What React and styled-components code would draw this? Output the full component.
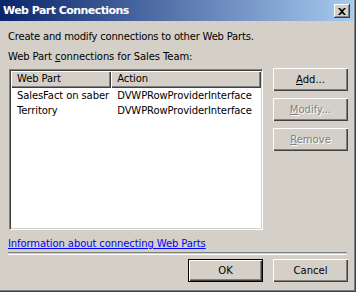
import React from 'react';
import styled, { createGlobalStyle } from 'styled-components';

const GlobalStyle = createGlobalStyle`
  html, body {
    margin: 0;
    padding: 0;
    background: #d4d0c8;
  }
  body {
    font-family: Tahoma, "DejaVu Sans", sans-serif;
    font-size: 11px;
  }
`;

const rows = [
  { part: 'SalesFact on saber', action: 'DVWPRowProviderInterface' },
  { part: 'Territory', action: 'DVWPRowProviderInterface' },
];

function App() {
  return (
    <>
      <GlobalStyle />
      <Window>
        <TitleBar>
          <Title>Web Part Connections</Title>
          <CloseButton aria-label='Close'>
            <svg width='8' height='7' viewBox='0 0 8 7'>
              <path d='M0 0h2l2 2 2-2h2L5 3.5 8 7H6L4 5 2 7H0l3-3.5z' fill='#000' />
            </svg>
          </CloseButton>
        </TitleBar>
        <Body>
          <Text>Create and modify connections to other Web Parts.</Text>
          <Label>Web Part <u>c</u>onnections for Sales Team:</Label>
          <Main>
            <ListBox>
              <HeaderRow>
                <HeaderCell $width={101}>Web Part</HeaderCell>
                <HeaderCell $width={151}>Action</HeaderCell>
              </HeaderRow>
              {rows.map((r) => (
                <Row key={r.part}>
                  <Cell $width={101}>{r.part}</Cell>
                  <Cell $width={151}>{r.action}</Cell>
                </Row>
              ))}
            </ListBox>
            <SideButtons>
              <Button><u>A</u>dd...</Button>
              <Button disabled><u>M</u>odify...</Button>
              <Button disabled><u>R</u>emove</Button>
            </SideButtons>
          </Main>
          <InfoLink href='#'>Information about connecting Web Parts</InfoLink>
          <Separator />
          <Footer>
            <Button $default>OK</Button>
            <Button>Cancel</Button>
          </Footer>
        </Body>
      </Window>
    </>
  );
}

export default App;

const Window = styled.div`
  width: 356px;
  height: 292px;
  box-sizing: border-box;
  background: #d4d0c8;
  border-right: 1px solid #404040;
  border-bottom: 1px solid #404040;
  box-shadow: inset -1px -1px 0 #808080;
  padding: 0 2px 2px 0;
  display: flex;
  flex-direction: column;
  overflow: hidden;
`;

const TitleBar = styled.div`
  height: 21px;
  display: flex;
  align-items: center;
  justify-content: space-between;
  padding: 0 3px 0 3px;
  background: linear-gradient(to right, #0a246a, #a6caf0);
`;

const Title = styled.span`
  color: #fff;
  font-weight: bold;
  font-size: 11px;
  font-family: "DejaVu Sans", sans-serif;
  letter-spacing: -0.55px;
`;

const CloseButton = styled.button`
  width: 16px;
  height: 14px;
  padding: 0;
  margin-top: 1px;
  display: flex;
  align-items: center;
  justify-content: center;
  background: #d4d0c8;
  border: none;
  box-shadow: inset -1px -1px #404040, inset 1px 1px #fff, inset -2px -2px #808080;
`;

const Body = styled.div`
  flex: 1;
  display: flex;
  flex-direction: column;
  padding: 9px 0 0 8px;
  color: #000;
  font-family: "DejaVu Sans", sans-serif;
  font-size: 10px;
  letter-spacing: -0.1px;
`;

const Text = styled.div`
  height: 20px;
  line-height: 13px;
  letter-spacing: -0.2px;
`;

const Label = styled.div`
  height: 18px;
  line-height: 13px;
`;

const Main = styled.div`
  display: flex;
  gap: 10px;
`;

const ListBox = styled.div`
  width: 254px;
  height: 161px;
  box-sizing: border-box;
  margin: 1px 0 0 1px;
  background: #fff;
  border-top: 1px solid #808080;
  border-left: 1px solid #808080;
  border-right: 1px solid #fff;
  border-bottom: 1px solid #fff;
  box-shadow: inset 1px 1px #404040, inset -1px -1px #d4d0c8;
  padding: 1px;
`;

const HeaderRow = styled.div`
  display: flex;
  height: 17px;
`;

const HeaderCell = styled.div`
  width: ${(p) => p.$width}px;
  box-sizing: border-box;
  background: #d4d0c8;
  padding-left: 6px;
  line-height: 16px;
  box-shadow: inset 1px 1px #fff, inset -1px -1px #404040, inset -2px -2px #808080;
`;

const Row = styled.div`
  display: flex;
  height: 15px;
  line-height: 15px;
`;

const Cell = styled.div`
  width: ${(p) => p.$width}px;
  padding-left: 6px;
  box-sizing: border-box;
  white-space: nowrap;
`;

const SideButtons = styled.div`
  display: flex;
  flex-direction: column;
  gap: 7px;
`;

const Button = styled.button`
  width: 75px;
  height: 23px;
  padding: 0;
  background: #d4d0c8;
  font-family: "DejaVu Sans", sans-serif;
  font-size: 10px;
  color: #000;
  border: ${(p) => (p.$default ? '1px solid #000' : 'none')};
  box-shadow: inset 1px 1px #fff, inset -1px -1px #404040, inset -2px -2px #808080;
  &:disabled {
    color: #808080;
    text-shadow: 1px 1px #fff;
  }
  u {
    text-decoration-thickness: 1px;
  }
`;

const InfoLink = styled.a`
  margin-top: 7px;
  line-height: 13px;
  color: #0000ff;
  align-self: flex-start;
`;

const Separator = styled.div`
  margin: 2px 0 0 0;
  width: 339px;
  height: 1px;
  border-top: 1px solid #808080;
  border-bottom: 1px solid #fff;
`;

const Footer = styled.div`
  display: flex;
  justify-content: flex-end;
  gap: 10px;
  margin-top: 4px;
  padding-right: 5px;
`;
